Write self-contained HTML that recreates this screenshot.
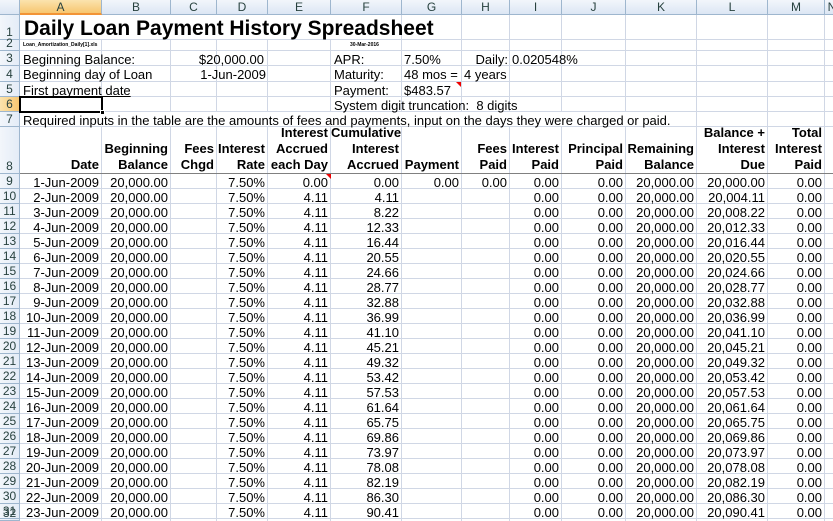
<!DOCTYPE html><html><head><meta charset="utf-8"><style>
*{margin:0;padding:0;box-sizing:border-box}
body{width:833px;height:521px;overflow:hidden;background:#fff;font-family:"Liberation Sans",Arial,sans-serif;font-size:13px;color:#000;position:relative}
.c{position:absolute;white-space:nowrap;line-height:15px}
.r{text-align:right}
.b{font-weight:bold}
.vl{position:absolute;top:15px;bottom:0;width:1px;background:#d0d7e5}
.hl{position:absolute;left:20px;right:0;height:1px;background:#d0d7e5}
.ch{position:absolute;top:0;height:15px;background:linear-gradient(#f2f6fb,#dce6f4);border-right:1px solid #9eb6ce;border-bottom:1px solid #9eb6ce;color:#27413e;text-align:center;line-height:15px;font-size:12px}
.rh{position:absolute;left:0;width:20px;background:linear-gradient(90deg,#f2f6fb,#e4ecf7);border-right:1px solid #9eb6ce;border-bottom:1px solid #9eb6ce;color:#27413e;text-align:center;font-size:12px;display:flex;align-items:flex-end;justify-content:center;line-height:14px}
</style></head><body>
<div id="g"></div>
<script>
var X=[20,102,171,217,268,331,402,462,510,562,626,697,768,825,840];
var L="ABCDEFGHIJKLMN";
var Y=[15,40,51,66,82,97,112,127,174];for(var i=0;i<23;i++)Y.push(189+i*15);
var h="";
// gridlines
for(var i=1;i<X.length;i++)h+='<div class="vl" style="left:'+(X[i]-1)+'px"></div>';
for(var i=1;i<Y.length;i++)h+='<div class="hl" style="top:'+(Y[i]-1)+'px'+(i==8?';background:#808080':'')+'"></div>';
// white-out merged areas
h+='<div style="position:absolute;left:21px;top:15px;width:380px;height:24px;background:#fff"></div>';
h+='<div style="position:absolute;left:21px;top:112px;width:630px;height:14px;background:#fff"></div>';
// column headers
h+='<div class="ch" style="left:0;width:20px"></div>';
for(var i=0;i<14;i++)h+='<div class="ch" style="left:'+X[i]+'px;width:'+(X[i+1]-X[i])+'px'+(i==0?';background:linear-gradient(#fbe3ae,#f7c670);border-bottom:2px solid #f29436':'')+'">'+L[i]+'</div>';
// row headers
for(var i=0;i<Y.length;i++){var t=Y[i],b=(i+1<Y.length?Y[i+1]:521);h+='<div class="rh" style="top:'+t+'px;height:'+(b-t)+'px'+(i==5?';background:linear-gradient(90deg,#fbe3ae,#f7c670)':'')+'">'+(i+1)+'</div>';}
function c(x,y,w,t,cl,st){h+='<div class="c '+(cl||'')+'" style="left:'+x+'px;top:'+y+'px;width:'+w+'px;'+(st||'')+'">'+t+'</div>';}
c(24,18,500,'Daily Loan Payment History Spreadsheet','b','font-size:21px;line-height:22px');
c(23,41,150,'Loan_Amortization_Daily[1].xls','b','font-size:5px;line-height:8px');
c(350,41,60,'30-Mar-2016','b','font-size:5px;line-height:8px');
c(23,52,200,'Beginning Balance:');c(102,52,162,'$20,000.00','r');
c(23,67,200,'Beginning day of Loan');c(102,67,164,'1-Jun-2009','r');
c(23,83,200,'First payment date','','text-decoration:underline');
c(334,52,60,'APR:');c(404,52,60,'7.50%');c(462,52,46,'Daily:','r');c(512,52,90,'0.020548%');
c(334,67,60,'Maturity:');c(404,67,60,'48 mos =');c(464,67,60,'4 years');
c(334,83,60,'Payment:');c(404,83,60,'$483.57');
c(334,98,150,'System digit truncation:&nbsp; 8 digits');
c(23,113,700,'Required inputs in the table are the amounts of fees and payments, input on the days they were charged or paid.');
// header row 8
var hd=[['Date'],['Beginning','Balance'],['Fees','Chgd'],['Interest','Rate'],['Interest','Accrued','each Day'],['Cumulative','Interest','Accrued'],['Payment'],['Fees','Paid'],['Interest','Paid'],['Principal','Paid'],['Remaining','Balance'],['Balance +','Interest','Due'],['Total','Interest','Paid']];
for(var i=0;i<13;i++){var a=hd[i];for(var k=0;k<a.length;k++){c(X[i],173-16*(a.length-k),X[i+1]-X[i]-3,a[k],'r b');}}
// red markers
h+='<div style="position:absolute;left:326px;top:174px;border-left:5px solid transparent;border-top:5px solid #e00"></div>';
h+='<div style="position:absolute;left:456px;top:82px;border-left:5px solid transparent;border-top:5px solid #e00"></div>';
// selected A6
h+='<div style="position:absolute;left:19px;top:96px;width:84px;height:17px;border:2px solid #000"></div><div style="position:absolute;left:100px;top:110px;width:5px;height:5px;background:#000;border:1px solid #fff"></div>';
var cum=[0,4.11,8.22,12.33,16.44,20.55,24.66,28.77,32.88,36.99,41.10,45.21,49.32,53.42,57.53,61.64,65.75,69.86,73.97,78.08,82.19,86.30,90.41];
function f(n){var s=n.toFixed(2),p=s.split('.');return p[0].replace(/\B(?=(\d{3})+$)/g,',')+'.'+p[1];}
for(var r=0;r<23;r++){var y=Y[8+r]+1,w=function(i){return X[i+1]-X[i]-3};
c(X[0],y,w(0),(r+1)+'-Jun-2009','r');c(X[1],y,w(1),'20,000.00','r');c(X[3],y,w(3),'7.50%','r');
c(X[4],y,w(4),r==0?'0.00':'4.11','r');c(X[5],y,w(5),f(cum[r]),'r');
if(r==0){c(X[6],y,w(6),'0.00','r');c(X[7],y,w(7),'0.00','r');}
c(X[8],y,w(8),'0.00','r');c(X[9],y,w(9),'0.00','r');c(X[10],y,w(10),'20,000.00','r');c(X[11],y,w(11),f(20000+cum[r]),'r');c(X[12],y,w(12),'0.00','r');}
document.getElementById('g').innerHTML=h;
</script>
</body></html>
